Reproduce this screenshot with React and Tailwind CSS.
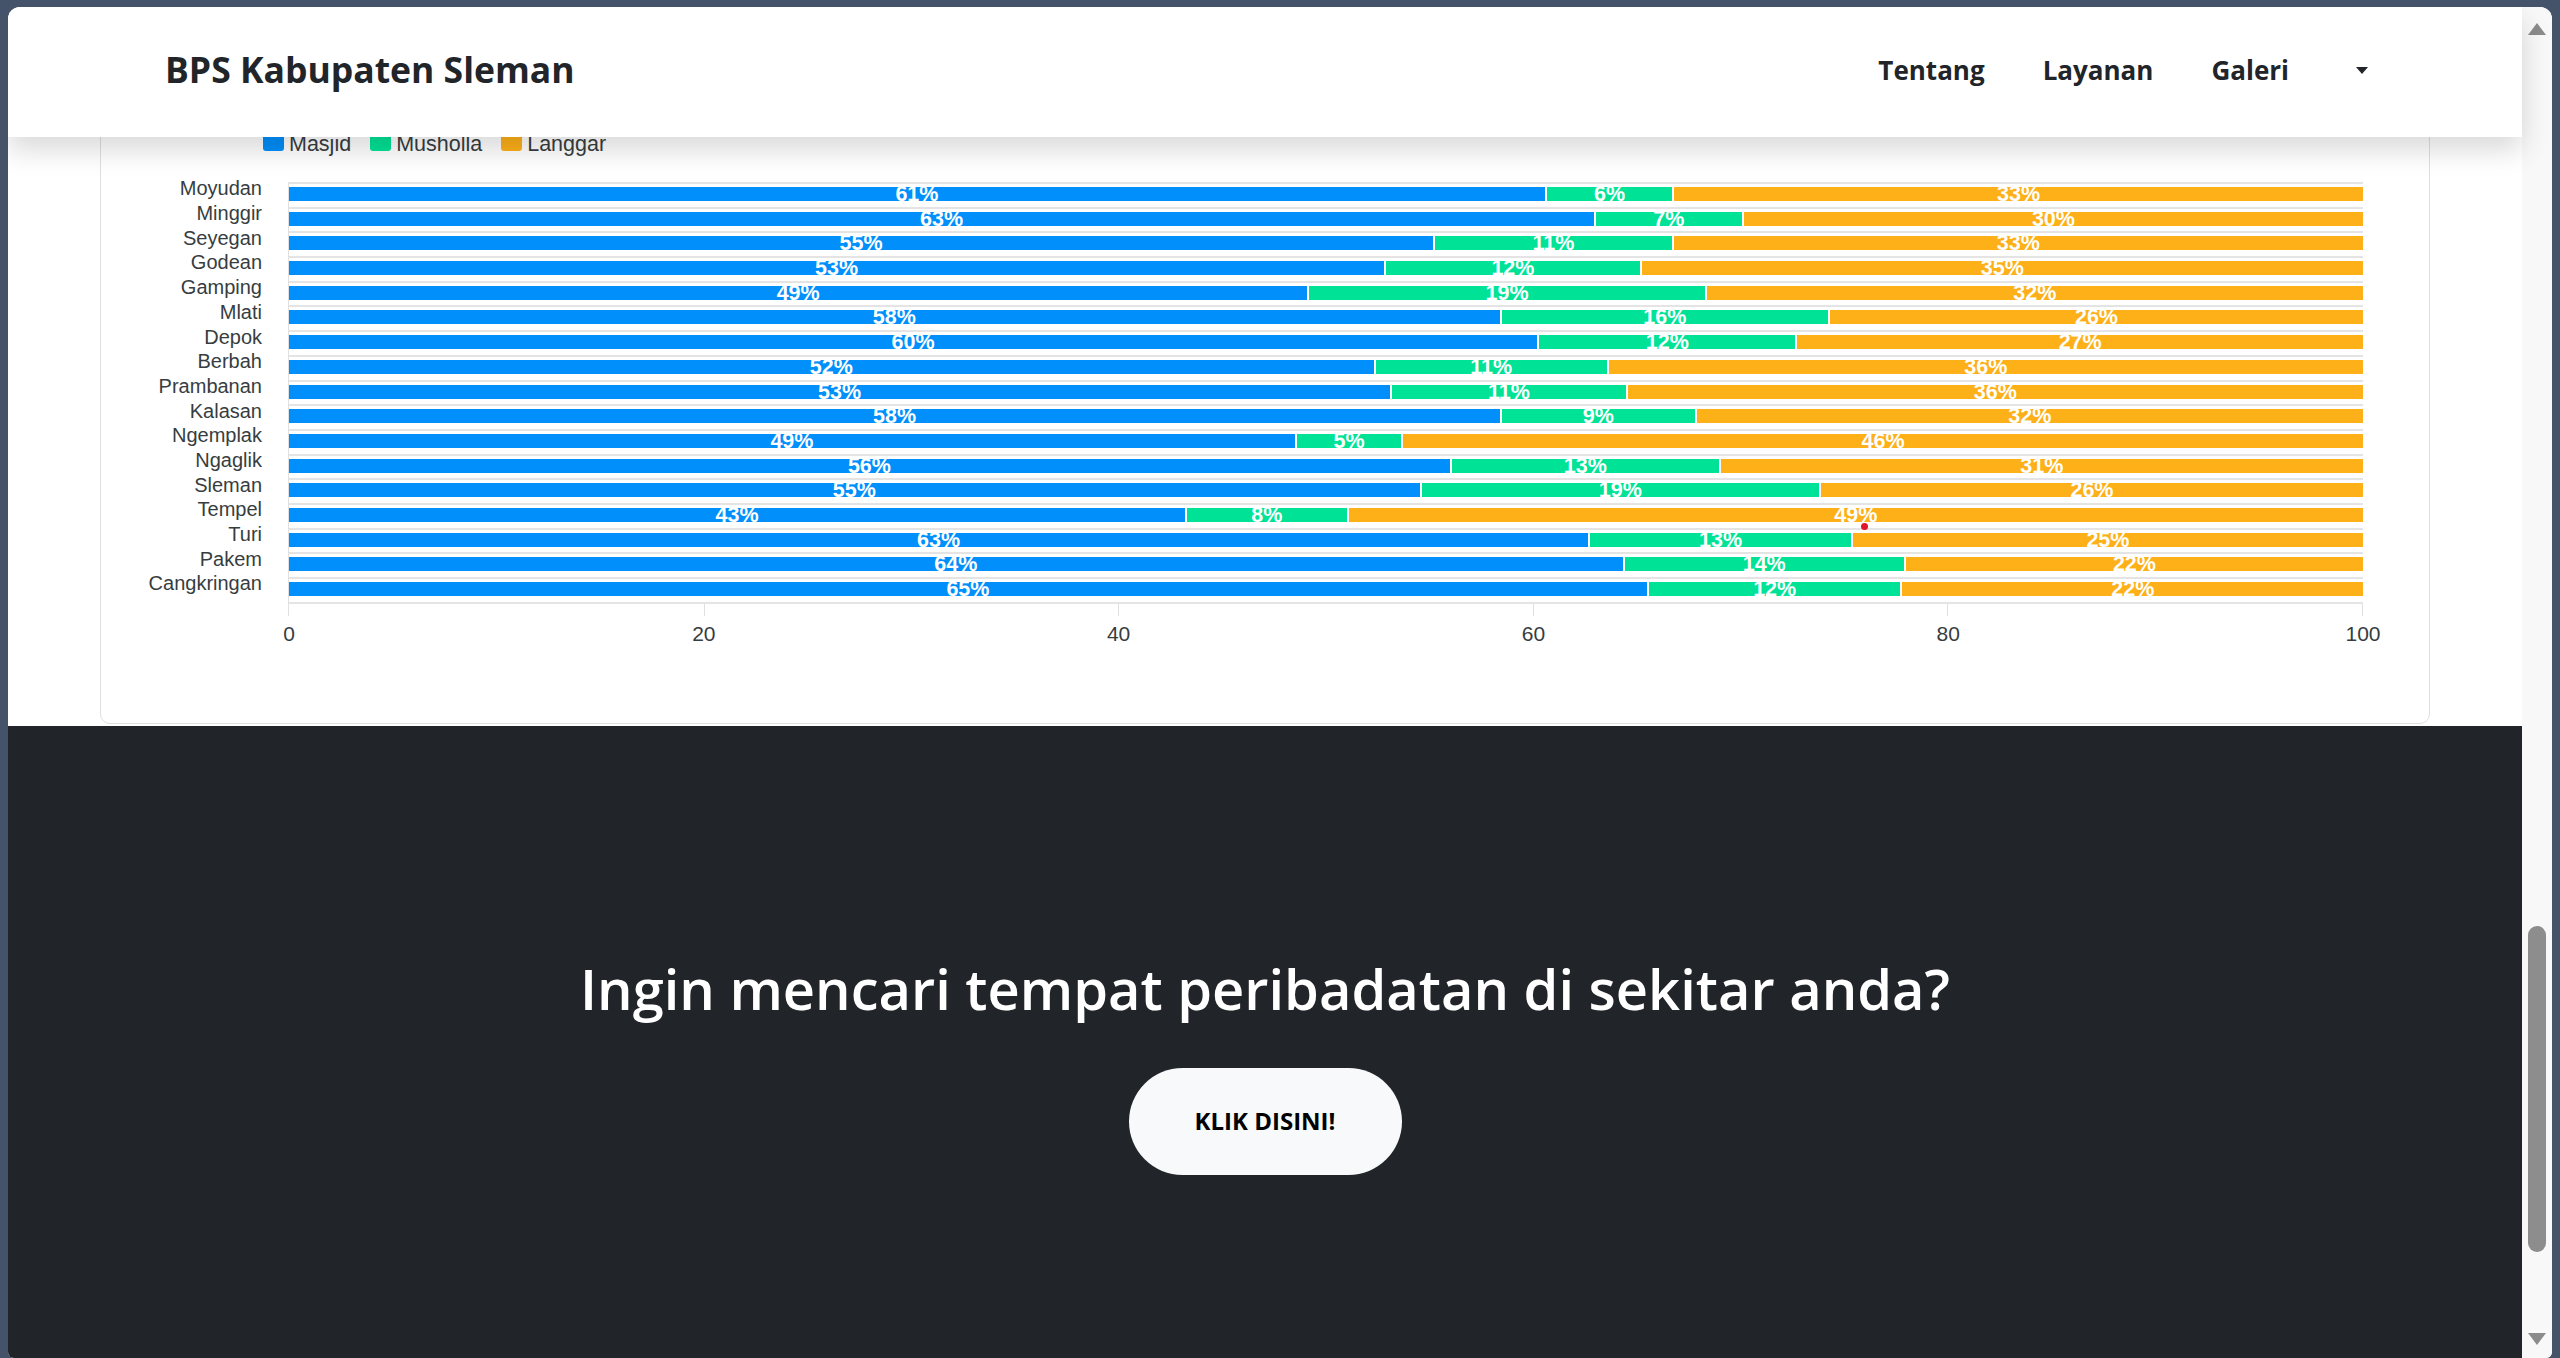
const rows = [
  ["Moyudan", 60.55, 66.69, 61, 6, 33],
  ["Minggir", 62.92, 70.05, 63, 7, 30],
  ["Seyegan", 55.17, 66.67, 55, 11, 33],
  ["Godean", 52.8, 65.13, 53, 12, 35],
  ["Gamping", 49.1, 68.26, 49, 19, 32],
  ["Mlati", 58.37, 74.2, 58, 16, 26],
  ["Depok", 60.18, 72.63, 60, 12, 27],
  ["Berbah", 52.3, 63.53, 52, 11, 36],
  ["Prambanan", 53.1, 64.45, 53, 11, 36],
  ["Kalasan", 58.39, 67.77, 58, 9, 32],
  ["Ngemplak", 48.5, 53.63, 49, 5, 46],
  ["Ngaglik", 55.97, 68.94, 56, 13, 31],
  ["Sleman", 54.52, 73.77, 55, 19, 26],
  ["Tempel", 43.2, 51.0, 43, 8, 49],
  ["Turi", 62.64, 75.31, 63, 13, 25],
  ["Pakem", 64.3, 77.86, 64, 14, 22],
  ["Cangkringan", 65.47, 77.7, 65, 12, 22],
];

const legend = [
  ["Masjid", "bg-[#008ffb]"],
  ["Musholla", "bg-[#00e396]"],
  ["Langgar", "bg-[#feb019]"],
];

function Seg({ w, label, color, first }) {
  return (
    <div
      className={`relative flex items-start justify-center h-full ${color} ${first ? "" : "border-l-2 border-white"}`}
      style={{ width: `${w}%` }}
    >
      <span className="-mt-[3px] text-[21.5px] leading-[21px] font-bold text-white whitespace-nowrap">
        {label}%
      </span>
    </div>
  );
}

function Chart() {
  return (
    <div className="font-['Liberation_Sans',Arial,sans-serif] text-[#373d3f]">
      <div className="flex items-start h-[23px] pl-[162px] gap-[19px]">
        {legend.map(([name, color]) => (
          <div key={name} className="flex items-start">
            <span className={`w-[21px] h-[20px] rounded-[3px] ${color}`} />
            <span className="ml-[5px] mt-[1.5px] text-[21.5px] leading-[22px]">{name}</span>
          </div>
        ))}
      </div>
      <div className="flex mt-[28px]">
        <div className="w-[161px] -mt-[3.6px] flex flex-col text-right text-[20px] leading-[20px]">
          {rows.map((r) => (
            <div key={r[0]} className="h-[24.7px] whitespace-nowrap">
              {r[0]}
            </div>
          ))}
        </div>
        <div className="ml-[26px] w-[2075px] flex flex-col">
          <div className="relative border-l border-[#e0e0e0]">
            {rows.map((r) => (
              <div key={r[0]} className="h-[24.7px] border-t-2 border-[#e4e4e4] pt-[3px]">
                <div className="flex h-[14px]">
                  <Seg w={r[1]} label={r[3]} color="bg-[#008ffb]" first />
                  <Seg w={r[2] - r[1]} label={r[4]} color="bg-[#00e396]" />
                  <Seg w={100 - r[2]} label={r[5]} color="bg-[#feb019]" />
                </div>
              </div>
            ))}
            <div className="border-t-2 border-[#e4e4e4]" />
            <div className="flex justify-between h-[12px]">
              {[0, 20, 40, 60, 80, 100].map((t) => (
                <span key={t} className={`w-[1px] h-full ${t === 0 ? "bg-transparent" : "bg-[#e0e0e0]"}`} />
              ))}
            </div>
            <span className="absolute left-[1572px] top-[341px] w-[7px] h-[7px] rounded-full bg-[#e0162b]" />
          </div>
          <div className="flex justify-between mt-[8px] text-[21px] leading-[20px] pl-[1px]">
            {[0, 20, 40, 60, 80, 100].map((t) => (
              <div key={t} className="w-0 flex justify-center">
                <span className="whitespace-nowrap">{t}</span>
              </div>
            ))}
          </div>
        </div>
      </div>
    </div>
  );
}

export default function App() {
  return (
    <div className="w-[2560px] h-[1358px] bg-[#44536a] pl-[8px] pr-[8px] pt-[7px] overflow-hidden">
      <div className="h-full w-full flex rounded-t-[12px] rounded-b-[6px] overflow-hidden bg-white">
        <div className="flex-1 flex flex-col min-w-0">
          <nav className="relative z-10 h-[130px] shrink-0 bg-white shadow-[0_13px_26px_rgba(0,0,0,0.15)] flex items-center justify-between pl-[157px] pr-[154px] pb-[4px] font-['Open_Sans',sans-serif] text-[#212529]">
            <div className="text-[35.5px] font-bold whitespace-nowrap">BPS Kabupaten Sleman</div>
            <div className="flex items-center gap-[58px] text-[26px] font-bold">
              <span>Tentang</span>
              <span>Layanan</span>
              <span>Galeri</span>
              <span className="ml-[9px] w-0 h-0 border-x-[6.5px] border-x-transparent border-t-[7px] border-t-[#212529]" />
            </div>
          </nav>
          <main className="bg-white px-[92px] pb-[2px]">
            <div className="-mt-[20px] pt-[13px] pb-[79px] border border-[#dfdfdf] rounded-b-[10px]">
              <Chart />
            </div>
          </main>
          <section className="flex-1 bg-[#212529] flex flex-col items-center pt-[229px] font-['Open_Sans',sans-serif]">
            <h2 className="text-white text-[56px] leading-[1.2] font-semibold whitespace-nowrap">
              Ingin mencari tempat peribadatan di sekitar anda?
            </h2>
            <button className="mt-[46px] w-[273px] h-[107px] rounded-full bg-[#f8f9fa] text-black text-[24px] font-bold flex items-center justify-center">
              KLIK DISINI!
            </button>
          </section>
        </div>
        <div className="w-[30px] shrink-0 bg-[#f8f8f8] flex flex-col items-center">
          <span className="mt-[16px] w-0 h-0 border-x-[9px] border-x-transparent border-b-[12px] border-b-[#8b8b8b]" />
          <div className="flex-1" />
          <div className="w-[18px] h-[326px] rounded-full bg-[#8d8d8d]" />
          <div className="h-[81px]" />
          <span className="w-0 h-0 border-x-[9px] border-x-transparent border-t-[12px] border-t-[#8b8b8b]" />
          <div className="h-[13px]" />
        </div>
      </div>
    </div>
  );
}
